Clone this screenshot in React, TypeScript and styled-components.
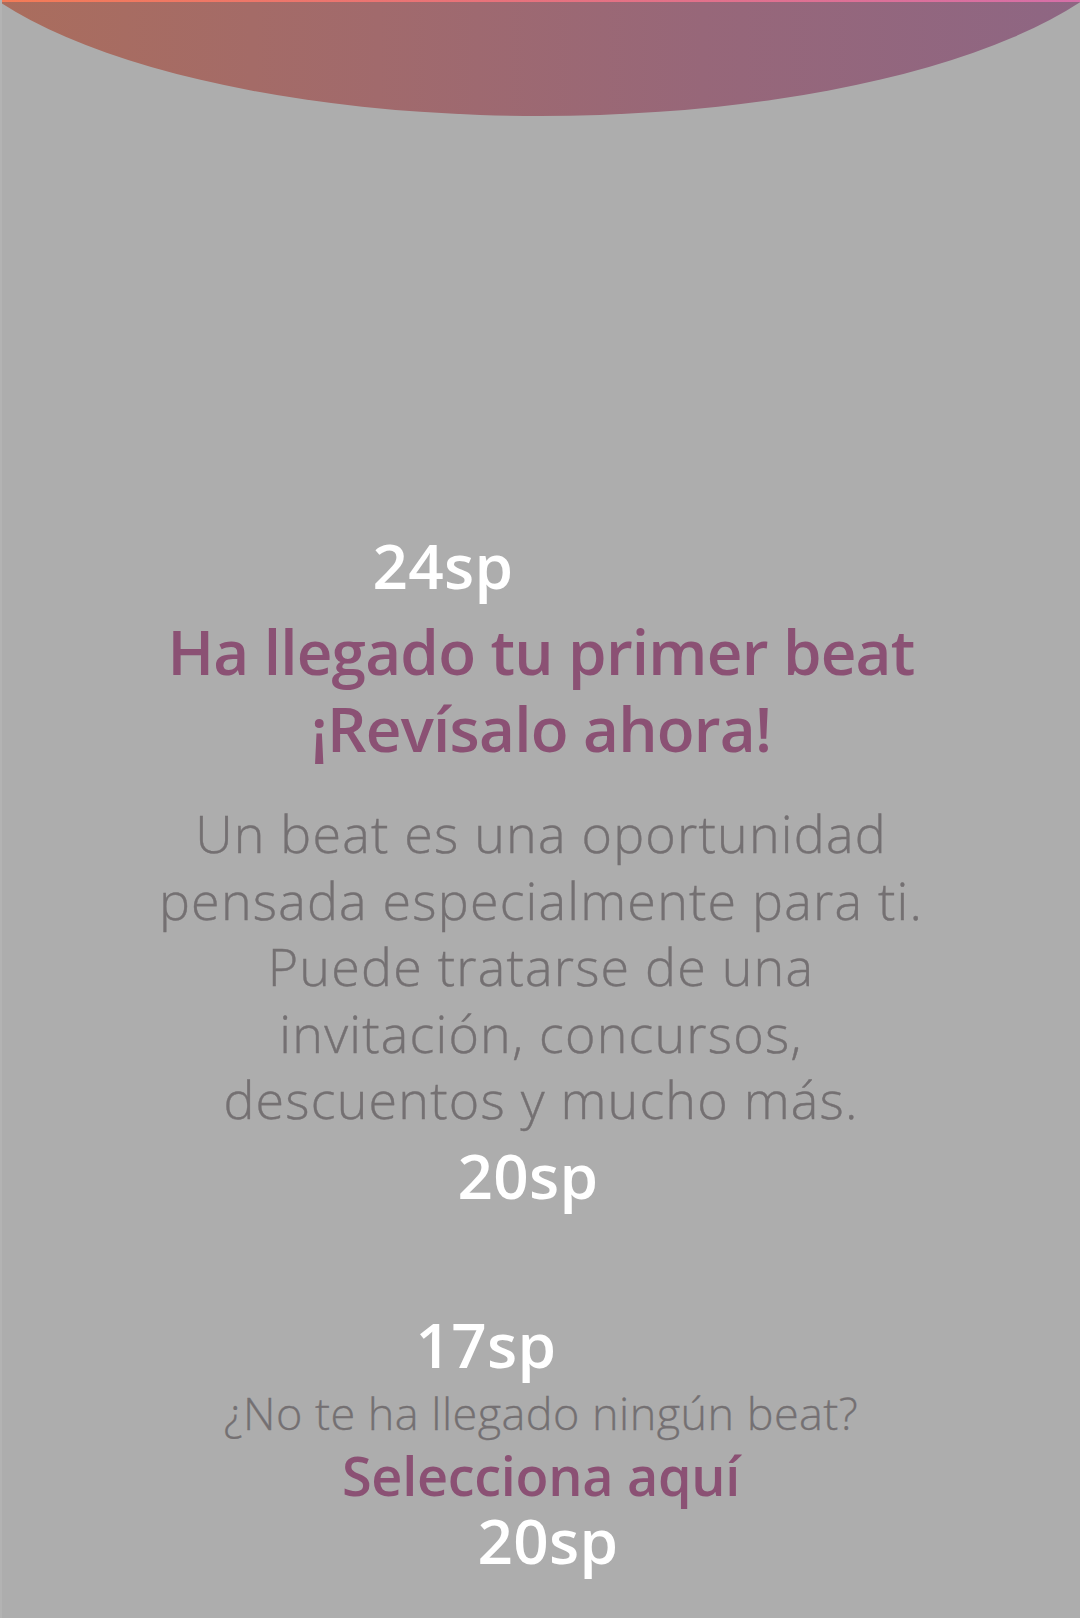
import React from "react";
import styled, { createGlobalStyle } from "styled-components";

const GlobalStyle = createGlobalStyle`
  html, body {
    margin: 0;
    padding: 0;
    background: #adadad;
  }
  * { box-sizing: border-box; }
`;

const Page = styled.div`
  width: 1080px;
  height: 1618px;
  background: #adadad;
  border-left: 2px solid #b3b3b3;
  display: flex;
  flex-direction: column;
  align-items: center;
  overflow: hidden;
  font-family: "Open Sans", "Noto Sans", sans-serif;
`;

const Header = styled.div`
  align-self: stretch;
  height: 116px;
  margin-left: -2px;
  flex-shrink: 0;
  background:
    linear-gradient(90deg, #f47b56 0%, #e8727a 45%, #d66fa8 100%) top / 100% 2px no-repeat,
    linear-gradient(90deg, #aa6d5d 0%, #a16a6c 35%, #976779 65%, #8e6683 100%);
  clip-path: ellipse(613px 216px at 50% -100px);
`;

const SizeLabel = styled.div<{ $top: number; $shift: number }>`
  margin-top: ${(p) => p.$top}px;
  transform: translateX(${(p) => p.$shift}px);
  color: #ffffff;
  font-size: 62px;
  font-weight: 600;
  line-height: 62px;
  height: 62px;
  letter-spacing: 0.3px;
`;

const Title = styled.h1`
  margin: 17px 0 0;
  color: #8b5174;
  font-size: 62px;
  font-weight: 600;
  line-height: 77px;
  letter-spacing: -0.8px;
  text-align: center;
`;

const Body = styled.p`
  margin: 33px 0 0;
  color: #747072;
  font-size: 52px;
  font-weight: 300;
  line-height: 66.5px;
  letter-spacing: 1.2px;
  text-align: center;
  -webkit-text-stroke: 0.4px #747072;
`;

const Line = styled.span`
  display: block;
  white-space: nowrap;
`;

const Question = styled.p`
  margin: 13px 0 0;
  color: #747072;
  font-size: 45px;
  font-weight: 300;
  line-height: 50px;
  letter-spacing: 0.45px;
  text-align: center;
  -webkit-text-stroke: 0.3px #747072;
`;

const Action = styled.a`
  display: block;
  margin-top: 8px;
  color: #8b5174;
  font-size: 54px;
  font-weight: 600;
  line-height: 58px;
  letter-spacing: -0.3px;
  text-align: center;
  text-decoration: none;
  cursor: pointer;
`;

export default function App() {
  return (
    <>
      <GlobalStyle />
      <Page>
        <Header />
        <SizeLabel $top={418} $shift={-98}>24sp</SizeLabel>
        <Title>
          <Line>Ha llegado tu primer beat</Line>
          <Line>¡Revísalo ahora!</Line>
        </Title>
        <Body>
          <Line>Un beat es una oportunidad</Line>
          <Line>pensada especialmente para ti.</Line>
          <Line>Puede tratarse de una</Line>
          <Line>invitación, concursos,</Line>
          <Line>descuentos y mucho más.</Line>
        </Body>
        <SizeLabel $top={11} $shift={-13}>20sp</SizeLabel>
        <SizeLabel $top={107} $shift={-55}>17sp</SizeLabel>
        <Question>¿No te ha llegado ningún beat?</Question>
        <Action>Selecciona aquí</Action>
        <SizeLabel $top={5} $shift={7}>20sp</SizeLabel>
      </Page>
    </>
  );
}
